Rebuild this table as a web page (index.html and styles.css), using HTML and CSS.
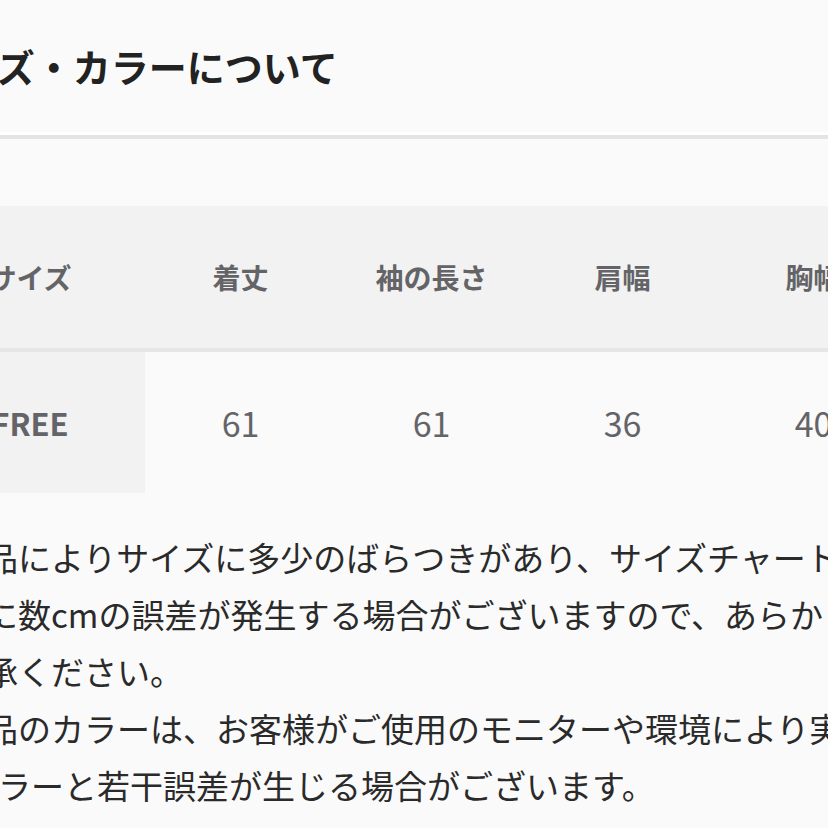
FILE: index.html
```html
<!DOCTYPE html>
<html lang="ja">

<head>
    <meta charset="UTF-8">
    <meta name="viewport" content="width=device-width, initial-scale=1.0">
    <title>サイズ・カラーについて</title>
    <link rel="stylesheet" href="styles.css">
</head>

<body>
    <div class="page">
        <!-- 見出し -->
        <h2 class="section-title">サイズ・カラーについて</h2>
        <div class="divider"></div>

        <!-- サイズ表 -->
        <table class="size-table">
            <thead>
                <tr>
                    <th class="col-size">サイズ</th>
                    <th>着丈</th>
                    <th>袖の長さ</th>
                    <th>肩幅</th>
                    <th>胸幅</th>
                </tr>
            </thead>
            <tbody>
                <tr>
                    <td class="col-size">FREE</td>
                    <td>61</td>
                    <td>61</td>
                    <td>36</td>
                    <td>40</td>
                </tr>
            </tbody>
        </table>

        <!-- 注意書き -->
        <div class="notes">
            <span class="line">商品によりサイズに多少のばらつきがあり、サイズチャートと実物</span>
            <span class="line">間に数cmの誤差が発生する場合がございますので、あらかじめご</span>
            <span class="line">了承ください。</span>
            <span class="line">商品のカラーは、お客様がご使用のモニターや環境により実際の</span>
            <span class="line line-indent">カラーと若干誤差が生じる場合がございます。</span>
        </div>
    </div>
</body>

</html>
```

FILE: styles.css
```css
/* ページ全体 */
html,
body {
    margin: 0;
    padding: 0;
    background-color: #fafafa;
    overflow: hidden;
}

.page {
    width: 828px;
    height: 828px;
    overflow: hidden;
    font-family: "Noto Sans CJK JP", "Noto Sans", sans-serif;
}

/* 見出し */
.section-title {
    margin: 0 0 0 -78px;
    padding-top: 38px;
    font-size: 38px;
    line-height: 56px;
    font-weight: 700;
    color: #222;
    white-space: nowrap;
}

/* 区切り線 */
.divider {
    margin-top: 38px;
    height: 4px;
    border-top: 3px solid #fff;
    background-color: #e4e4e4;
}

/* サイズ表 */
.size-table {
    width: 994px;
    margin: 67px 0 0 -85px;
    border-collapse: collapse;
    table-layout: fixed;
    white-space: nowrap;
}

.size-table th,
.size-table td {
    width: 191px;
    padding: 0;
    text-align: center;
    color: #646468;
}

.size-table .col-size {
    width: 230px;
}

.size-table th {
    height: 142px;
    background-color: #f2f2f2;
    border-bottom: 4px solid #e6e6e9;
    font-size: 28px;
    font-weight: 700;
}

.size-table td {
    height: 141px;
    font-size: 34px;
    font-weight: 400;
}

.size-table td.col-size {
    background-color: #f2f2f2;
    font-size: 31px;
    font-weight: 700;
}

/* 注意書き */
.notes {
    margin: 36px 0 0 -48px;
    font-size: 33px;
    line-height: 57px;
    color: #2a2a2a;
    white-space: nowrap;
}

.notes .line {
    display: block;
}

.notes .line-indent {
    padding-left: 13px;
}
```
